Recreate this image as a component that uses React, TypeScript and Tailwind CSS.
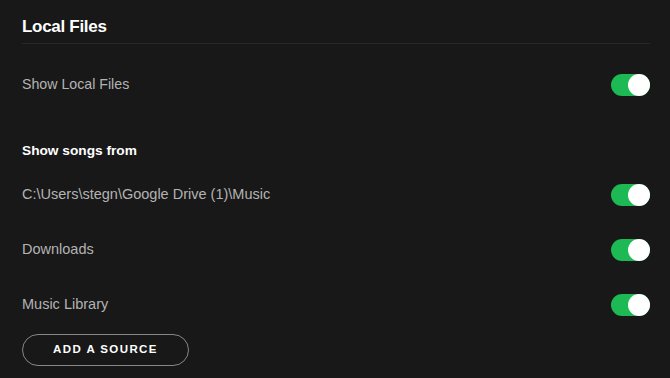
import React from "react";

function Toggle() {
  return (
    <div className="relative w-[39px] h-[22px] rounded-full bg-[#1db954] shrink-0">
      <div className="absolute right-0 top-0 w-[22px] h-[22px] rounded-full bg-white" />
    </div>
  );
}

function Row({ label }: { label: string }) {
  return (
    <div className="flex h-[55px] items-center justify-between">
      <span className="text-[14.5px] text-[#b3b3b3]">{label}</span>
      <Toggle />
    </div>
  );
}

export default function App() {
  return (
    <div
      className="w-[670px] h-[378px] overflow-hidden bg-[#181818] pl-[22px] pr-[20px]"
      style={{ fontFamily: '"Liberation Sans", Arial, sans-serif' }}
    >
      <div className="h-[44px] pt-[10px] flex items-center border-b border-[#282828]">
        <h1 className="text-[17px] font-bold text-white tracking-[-0.3px]">Local Files</h1>
      </div>
      <div className="mt-[13px] flex h-[56px] items-center justify-between">
        <span className="text-[14.2px] text-[#b3b3b3]">Show Local Files</span>
        <Toggle />
      </div>
      <div className="mt-[28px] h-[20px] flex items-center">
        <span className="text-[13.7px] font-bold text-white">Show songs from</span>
      </div>
      <div className="mt-[6px]">
        <Row label="C:\Users\stegn\Google Drive (1)\Music" />
        <Row label="Downloads" />
        <Row label="Music Library" />
      </div>
      <button className="mt-[2px] h-[32px] w-[167px] rounded-full border border-[#878787] text-white text-[11.5px] font-bold tracking-[1.4px]">
        ADD A SOURCE
      </button>
    </div>
  );
}
